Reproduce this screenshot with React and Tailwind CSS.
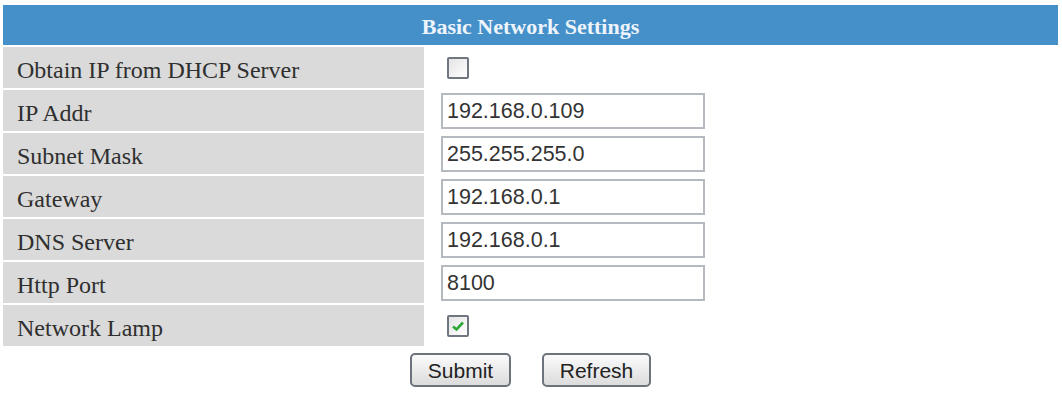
import React from "react";

const rows = [
  { label: "Obtain IP from DHCP Server", type: "checkbox", checked: false },
  { label: "IP Addr", type: "text", value: "192.168.0.109" },
  { label: "Subnet Mask", type: "text", value: "255.255.255.0" },
  { label: "Gateway", type: "text", value: "192.168.0.1" },
  { label: "DNS Server", type: "text", value: "192.168.0.1" },
  { label: "Http Port", type: "text", value: "8100" },
  { label: "Network Lamp", type: "checkbox", checked: true },
];

const CheckBox = ({ checked }) => (
  <span className="ml-[6px] flex h-[22px] w-[22px] items-center justify-center rounded-[2px] border-[2px] border-[#6f7680] bg-gradient-to-br from-[#e4e4e4] to-white">
    {checked && (
      <svg width="14" height="12" viewBox="0 0 14 12">
        <path d="M2 6.5 L5.5 9.5 L12 2.5" fill="none" stroke="#2fa83a" strokeWidth="2.6" />
      </svg>
    )}
  </span>
);

const App = () => {
  return (
    <div className="w-[1062px] h-[395px] bg-white pl-[3px] pr-[4px] pt-[5px]" style={{ fontFamily: '"Liberation Serif", "Times New Roman", serif' }}>
      {/* header */}
      <div className="flex h-[40px] items-center justify-center bg-[#4590c9] pt-[2px] text-[22px] font-bold text-[#eef4fb]">
        Basic Network Settings
      </div>

      <div className="mt-[2px] flex flex-col gap-[2px]">
        {rows.map((row) => (
          <div key={row.label} className="flex h-[41px]">
            <div className="flex w-[421px] items-center bg-[#dadada] pl-[14px] pt-[4px] text-[24px] text-[#2f2f2f]">
              {row.label}
            </div>
            <div className="flex flex-1 items-center pl-[17px]">
              {row.type === "checkbox" ? (
                <CheckBox checked={row.checked} />
              ) : (
                <input
                  type="text"
                  defaultValue={row.value}
                  className="h-[36px] w-[264px] border-[2px] border-[#b4bac0] bg-white px-[4px] pt-[2px] text-[21.5px] text-[#333] outline-none"
                  style={{ fontFamily: '"Liberation Sans", Arial, sans-serif' }}
                />
              )}
            </div>
          </div>
        ))}
      </div>

      {/* buttons */}
      <div className="mt-[7px] flex justify-center gap-[31px]" style={{ fontFamily: '"Liberation Sans", Arial, sans-serif' }}>
        <button className="h-[34px] w-[101px] rounded-[5px] border-[2px] border-[#6c737c] bg-gradient-to-b from-[#fbfbfb] to-[#dcdcdc] text-[21px] text-[#222]">
          Submit
        </button>
        <button className="h-[34px] w-[109px] rounded-[5px] border-[2px] border-[#6c737c] bg-gradient-to-b from-[#fbfbfb] to-[#dcdcdc] text-[21px] text-[#222]">
          Refresh
        </button>
      </div>
    </div>
  );
};

export default App;
